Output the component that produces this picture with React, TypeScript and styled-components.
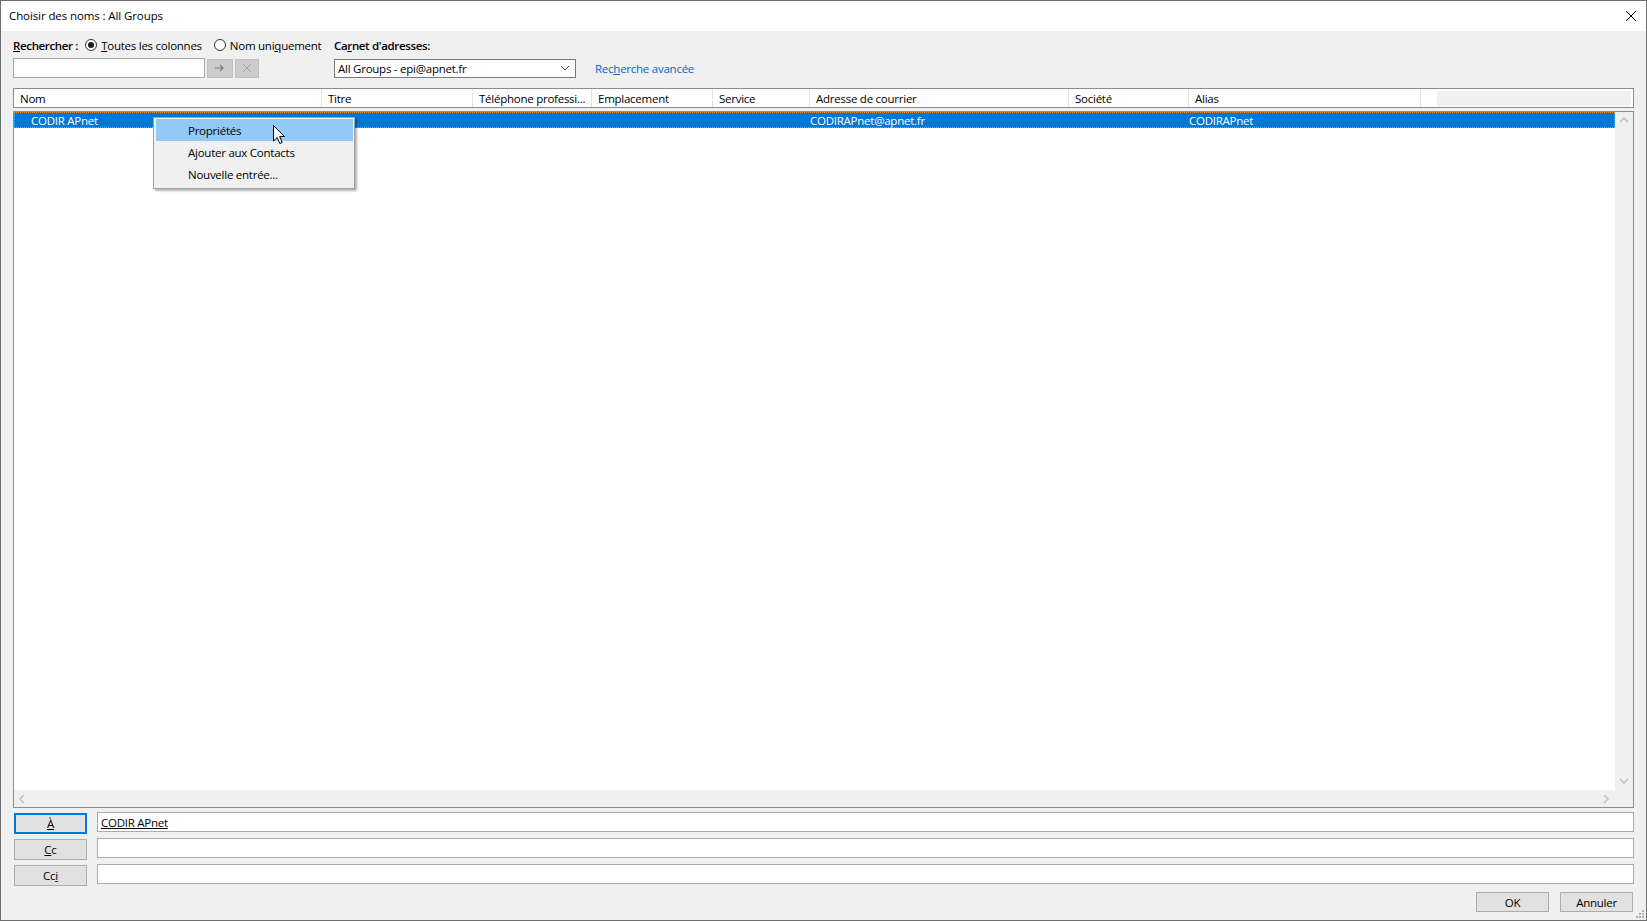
import styled, { createGlobalStyle } from "styled-components";

const GlobalStyle = createGlobalStyle`
  html, body {
    margin: 0;
    padding: 0;
    background: #ffffff;
  }
  body {
    font-family: "Open Sans", "Noto Sans", "Liberation Sans", sans-serif;
    font-size: 11.5px;
    letter-spacing: -0.25px;
    color: #000000;
  }
  * {
    box-sizing: border-box;
  }
`;

const columns = [
  { title: "Nom", width: 308 },
  { title: "Titre", width: 151 },
  { title: "Téléphone professi...", width: 119 },
  { title: "Emplacement", width: 121 },
  { title: "Service", width: 97 },
  { title: "Adresse de courrier", width: 259 },
  { title: "Société", width: 120 },
  { title: "Alias", width: 232 },
];

const selectedRow = ["CODIR APnet", "", "", "", "", "CODIRAPnet@apnet.fr", "", "CODIRAPnet"];

const menuItems = ["Propriétés", "Ajouter aux Contacts", "Nouvelle entrée..."];

const Chevron = ({ dir }: { dir: "up" | "down" | "left" | "right" }) => {
  const points = {
    up: "1,6 5,2 9,6",
    down: "1,2 5,6 9,2",
    left: "6,1 2,5 6,9",
    right: "2,1 6,5 2,9",
  }[dir];
  return (
    <svg width="10" height="10" viewBox="0 0 10 10">
      <polyline points={points} fill="none" stroke="#c2c2c2" strokeWidth="1.6" />
    </svg>
  );
};

const App = () => {
  return (
    <>
      <GlobalStyle />
      <Window>
        <TitleBar>
          <Title>Choisir des noms : All Groups</Title>
          <CloseButton>
            <svg width="12" height="12" viewBox="0 0 12 12">
              <path d="M1 1 L11 11 M11 1 L1 11" stroke="#000" strokeWidth="1" />
            </svg>
          </CloseButton>
        </TitleBar>

        <Body>
          <SearchArea>
            <LeftGroup>
              <LabelRow>
                <BoldLabel>
                  <u>R</u>echercher :
                </BoldLabel>
                <RadioOption $first>
                  <Radio $checked />
                  <span>
                    <u>T</u>outes les colonnes
                  </span>
                </RadioOption>
                <RadioOption>
                  <Radio />
                  <span>
                    Nom uni<u>q</u>uement
                  </span>
                </RadioOption>
              </LabelRow>
              <ControlsRow>
                <SearchInput />
                <ToolButton $width={26}>
                  <svg width="10" height="8" viewBox="0 0 10 8">
                    <path d="M0 4 H8 M5 1 L8 4 L5 7" fill="none" stroke="#7d7d7d" strokeWidth="1.2" />
                  </svg>
                </ToolButton>
                <ToolButton $width={24}>
                  <svg width="10" height="10" viewBox="0 0 10 10">
                    <path d="M1 1 L9 9 M9 1 L1 9" stroke="#a3a3a3" strokeWidth="1" />
                  </svg>
                </ToolButton>
              </ControlsRow>
            </LeftGroup>

            <RightGroup>
              <LabelRow>
                <BoldLabel>
                  Ca<u>r</u>net d'adresses:
                </BoldLabel>
              </LabelRow>
              <ControlsRow>
                <Combo>
                  <span>All Groups - epi@apnet.fr</span>
                  <svg width="10" height="6" viewBox="0 0 10 6">
                    <polyline points="1,1 5,5 9,1" fill="none" stroke="#444" strokeWidth="1" />
                  </svg>
                </Combo>
                <Link>
                  Rec<u>h</u>erche avancée
                </Link>
              </ControlsRow>
            </RightGroup>
          </SearchArea>

          <HeaderBox>
            {columns.map((c) => (
              <HeaderCell key={c.title} $width={c.width}>
                {c.title}
              </HeaderCell>
            ))}
            <HeaderFiller />
          </HeaderBox>

          <ListBox>
            <ListContent>
              <Row>
                {columns.map((c, i) => (
                  <RowCell key={c.title} $width={c.width} $first={i === 0}>
                    {selectedRow[i]}
                  </RowCell>
                ))}
              </Row>

              <ContextMenu>
                {menuItems.map((item, i) => (
                  <MenuItem key={item} $active={i === 0}>
                    {item}
                  </MenuItem>
                ))}
              </ContextMenu>

              <Cursor width="13" height="20" viewBox="0 0 13 20">
                <path
                  d="M0.5 0.5 L0.5 16 L4.2 12.4 L6.8 18.5 L9.2 17.5 L6.6 11.5 L11.5 11.5 Z"
                  fill="#ffffff"
                  stroke="#000000"
                  strokeWidth="1"
                  strokeLinejoin="miter"
                />
              </Cursor>
            </ListContent>
            <VScroll>
              <ScrollArrow>
                <Chevron dir="up" />
              </ScrollArrow>
              <ScrollArrow>
                <Chevron dir="down" />
              </ScrollArrow>
            </VScroll>
            <HScroll>
              <ScrollArrow>
                <Chevron dir="left" />
              </ScrollArrow>
              <ScrollArrow>
                <Chevron dir="right" />
              </ScrollArrow>
            </HScroll>
            <Corner />
          </ListBox>

          <Recipients>
            <RecipientButton $focused>
              <u>À</u>
            </RecipientButton>
            <RecipientInput>
              <Resolved>CODIR APnet</Resolved>
            </RecipientInput>
            <RecipientButton>
              <u>C</u>c
            </RecipientButton>
            <RecipientInput />
            <RecipientButton>
              Cc<u>i</u>
            </RecipientButton>
            <RecipientInput />
          </Recipients>

          <Footer>
            <DialogButton>OK</DialogButton>
            <DialogButton>Annuler</DialogButton>
          </Footer>
        </Body>

        <Grip width="10" height="10" viewBox="0 0 10 10">
          <rect x="8" y="2" width="2" height="2" fill="#b0b0b0" />
          <rect x="5" y="5" width="2" height="2" fill="#b0b0b0" />
          <rect x="8" y="5" width="2" height="2" fill="#b0b0b0" />
          <rect x="2" y="8" width="2" height="2" fill="#b0b0b0" />
          <rect x="5" y="8" width="2" height="2" fill="#b0b0b0" />
          <rect x="8" y="8" width="2" height="2" fill="#b0b0b0" />
        </Grip>
      </Window>
    </>
  );
};

export default App;

const Window = styled.div`
  position: relative;
  width: 1647px;
  height: 921px;
  border: 1px solid #6e6e6e;
  background: #f0f0f0;
  display: flex;
  flex-direction: column;
  overflow: hidden;
`;

const TitleBar = styled.div`
  height: 30px;
  flex-shrink: 0;
  background: #ffffff;
  display: flex;
  align-items: center;
  justify-content: space-between;
  padding-left: 8px;
`;

const Title = styled.div`
  font-size: 11.5px;
  letter-spacing: -0.1px;
  padding-bottom: 1px;
`;

const CloseButton = styled.div`
  width: 30px;
  height: 30px;
  display: flex;
  align-items: center;
  justify-content: center;
`;

const Body = styled.div`
  flex: 1;
  display: flex;
  flex-direction: column;
  padding: 7px 12px 8px 12px;
  min-height: 0;
`;

const SearchArea = styled.div`
  display: flex;
  flex-shrink: 0;
`;

const LeftGroup = styled.div`
  width: 321px;
  display: flex;
  flex-direction: column;
  gap: 6px;
`;

const RightGroup = styled.div`
  display: flex;
  flex-direction: column;
  gap: 6px;
`;

const LabelRow = styled.div`
  height: 14px;
  display: flex;
  align-items: center;
  white-space: nowrap;
`;

const BoldLabel = styled.span`
  font-weight: 600;
  letter-spacing: -0.35px;
`;

const RadioOption = styled.span<{ $first?: boolean }>`
  display: flex;
  align-items: center;
  gap: 4px;
  margin-left: ${({ $first }) => ($first ? "7px" : "12px")};
`;

const Radio = styled.span<{ $checked?: boolean }>`
  width: 12px;
  height: 12px;
  border-radius: 50%;
  border: 1px solid #333333;
  background: #ffffff;
  display: flex;
  align-items: center;
  justify-content: center;

  &::after {
    content: "";
    width: 6px;
    height: 6px;
    border-radius: 50%;
    background: ${({ $checked }) => ($checked ? "#1a1a1a" : "transparent")};
  }
`;

const ControlsRow = styled.div`
  height: 20px;
  display: flex;
  align-items: center;
  gap: 2px;
`;

const SearchInput = styled.div`
  width: 192px;
  height: 20px;
  background: #ffffff;
  border: 1px solid #a9a9a9;
`;

const ToolButton = styled.div<{ $width: number }>`
  width: ${({ $width }) => $width}px;
  height: 19px;
  background: #cccccc;
  border: 1px solid #bfbfbf;
  display: flex;
  align-items: center;
  justify-content: center;
`;

const Combo = styled.div`
  width: 242px;
  height: 19px;
  background: #ffffff;
  border: 1px solid #7a7a7a;
  display: flex;
  align-items: center;
  justify-content: space-between;
  padding: 0 5px 0 3px;
`;

const Link = styled.span`
  margin-left: 17px;
  color: #0066cc;
  white-space: nowrap;
`;

const HeaderBox = styled.div`
  margin-top: 10px;
  height: 20px;
  flex-shrink: 0;
  border: 1px solid #8c8c8c;
  background: #ffffff;
  display: flex;
  align-items: stretch;
`;

const HeaderCell = styled.div<{ $width: number }>`
  width: ${({ $width }) => $width}px;
  flex-shrink: 0;
  border-right: 1px solid #e5e5e5;
  padding-left: 6px;
  display: flex;
  align-items: center;
  white-space: nowrap;
  overflow: hidden;
`;

const HeaderFiller = styled.div`
  flex: 1;
  margin: 2px 2px 1px 16px;
  background: #f0f0f0;
`;

const ListBox = styled.div`
  margin-top: 3px;
  flex: 1;
  min-height: 0;
  border: 1px solid #8c8c8c;
  display: grid;
  grid-template-columns: 1fr 18px;
  grid-template-rows: 1fr 17px;
  background: #ffffff;
`;

const ListContent = styled.div`
  position: relative;
  background: #ffffff;
`;

const Row = styled.div`
  height: 16px;
  display: flex;
  background: #0078d7;
  color: #ffffff;
  outline: 1px dotted #e8902e;
  outline-offset: -1px;
`;

const RowCell = styled.div<{ $width: number; $first: boolean }>`
  width: ${({ $width }) => $width}px;
  flex-shrink: 0;
  padding-left: ${({ $first }) => ($first ? "17px" : "0")};
  display: flex;
  align-items: center;
  white-space: nowrap;
`;

const ContextMenu = styled.div`
  position: absolute;
  left: 139px;
  top: 5px;
  width: 202px;
  padding: 1px 1px 3px 2px;
  background: #f0f0f0;
  border: 1px solid #a0a0a0;
  box-shadow: 2px 2px 2px rgba(0, 0, 0, 0.3);
`;

const MenuItem = styled.div<{ $active: boolean }>`
  height: 22px;
  padding-left: 32px;
  display: flex;
  align-items: center;
  background: ${({ $active }) => ($active ? "#91c9f7" : "transparent")};
`;

const Cursor = styled.svg`
  position: absolute;
  left: 259px;
  top: 13px;
`;

const VScroll = styled.div`
  background: #f0f0f0;
  display: flex;
  flex-direction: column;
  justify-content: space-between;
`;

const HScroll = styled.div`
  background: #f0f0f0;
  display: flex;
  justify-content: space-between;
`;

const ScrollArrow = styled.div`
  width: 17px;
  height: 17px;
  display: flex;
  align-items: center;
  justify-content: center;
`;

const Corner = styled.div`
  background: #f0f0f0;
`;

const Recipients = styled.div`
  margin-top: 4px;
  padding-left: 1px;
  flex-shrink: 0;
  display: grid;
  grid-template-columns: 73px 1fr;
  grid-auto-rows: 22px;
  column-gap: 10px;
  row-gap: 4px;
`;

const RecipientButton = styled.div<{ $focused?: boolean }>`
  align-self: end;
  height: 21px;
  background: #e1e1e1;
  border: ${({ $focused }) => ($focused ? "2px solid #0078d7" : "1px solid #adadad")};
  display: flex;
  align-items: center;
  justify-content: center;
`;

const RecipientInput = styled.div`
  align-self: start;
  height: 20px;
  background: #ffffff;
  border: 1px solid #ababab;
  display: flex;
  align-items: center;
  padding-left: 3px;
`;

const Resolved = styled.span`
  text-decoration: underline;
`;

const Footer = styled.div`
  margin-top: 6px;
  padding-right: 1px;
  flex-shrink: 0;
  display: flex;
  justify-content: flex-end;
  gap: 11px;
`;

const DialogButton = styled.div`
  width: 73px;
  height: 20px;
  background: #e1e1e1;
  border: 1px solid #adadad;
  display: flex;
  align-items: center;
  justify-content: center;
`;

const Grip = styled.svg`
  position: absolute;
  right: 2px;
  bottom: 2px;
`;
